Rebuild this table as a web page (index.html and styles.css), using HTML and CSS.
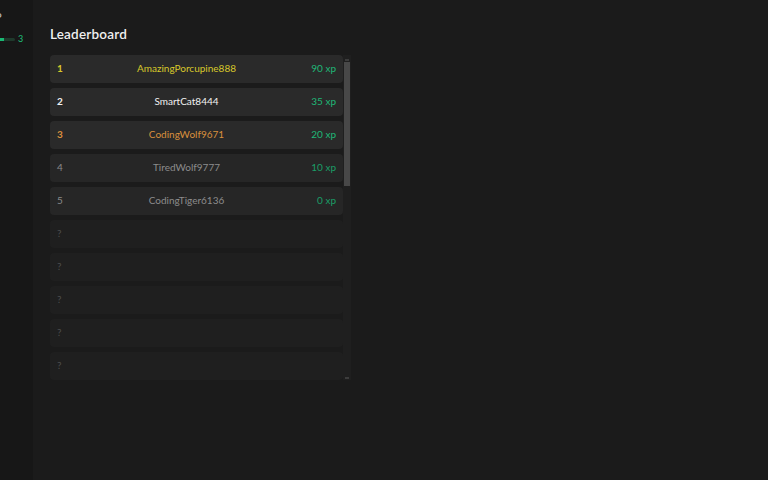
FILE: index.html
```html
<!DOCTYPE html>
<html>
<head>
<meta charset="utf-8">
<link rel="stylesheet" href="styles.css">
</head>
<body>
<div class="app">
  <aside class="sidebar">
    <div class="side-inner">
      <div class="side-mark">P</div>
      <div class="side-level">
        <div class="bar"><div class="bar-fill"></div></div>
        <span class="lvl">3</span>
      </div>
    </div>
  </aside>
  <main class="main">
    <h1 class="title">Leaderboard</h1>
    <div class="board">
      <div class="list">
        <div class="row gold"><span class="rank">1</span><span class="name">AmazingPorcupine888</span><span class="xp">90 xp</span></div>
        <div class="row silver"><span class="rank">2</span><span class="name">SmartCat8444</span><span class="xp">35 xp</span></div>
        <div class="row bronze"><span class="rank">3</span><span class="name">CodingWolf9671</span><span class="xp">20 xp</span></div>
        <div class="row plain"><span class="rank">4</span><span class="name">TiredWolf9777</span><span class="xp">10 xp</span></div>
        <div class="row plain"><span class="rank">5</span><span class="name">CodingTiger6136</span><span class="xp">0 xp</span></div>
        <div class="row empty"><span class="rank">?</span></div>
        <div class="row empty"><span class="rank">?</span></div>
        <div class="row empty"><span class="rank">?</span></div>
        <div class="row empty"><span class="rank">?</span></div>
        <div class="row empty"><span class="rank">?</span></div>
      </div>
      <div class="scrollbar">
        <div class="arrow up"></div>
        <div class="track"><div class="thumb"></div></div>
        <div class="arrow down"></div>
      </div>
    </div>
  </main>
</div>
</body>
</html>
```

FILE: styles.css
```css
html, body {
  margin: 0;
  padding: 0;
  height: 100%;
  background: #1b1b1b;
  font-family: "Lato", "Open Sans", sans-serif;
  color: #e8e8e8;
}
.app {
  display: flex;
  height: 480px;
}
.sidebar {
  width: 33px;
  flex: none;
  background: #171717;
  overflow: hidden;
}
.side-inner {
  margin-left: -8px;
  padding-top: 10px;
  display: flex;
  flex-direction: column;
  gap: 10px;
}
.side-mark {
  font-size: 11px;
  color: #bdbdbd;
  line-height: 14px;
  padding-left: 3px;
  height: 14px;
}
.side-level {
  display: flex;
  align-items: center;
  gap: 3px;
}
.bar {
  width: 23px;
  height: 3px;
  background: #1f3a2c;
  border-radius: 2px;
  overflow: hidden;
}
.bar-fill {
  width: 50%;
  height: 100%;
  background: #19b873;
}
.lvl {
  font-size: 9px;
  color: #1fbf77;
  line-height: 10px;
}
.main {
  flex: 1;
  padding: 25px 0 0 17px;
}
.title {
  margin: 0 0 12px 0;
  font-size: 13.5px;
  font-weight: 600;
  line-height: 18px;
  color: #f0f0f0;
  letter-spacing: 0.2px;
}
.board {
  display: flex;
  width: 301px;
  height: 325px;
}
.list {
  width: 293px;
  flex: none;
  overflow: hidden;
  display: flex;
  flex-direction: column;
  gap: 5px;
}
.scrollbar {
  width: 8px;
  flex: none;
  background: #1f1f1f;
  display: flex;
  flex-direction: column;
  padding-top: 2px;
  box-sizing: border-box;
}
.arrow {
  height: 5px;
  flex: none;
  display: flex;
  justify-content: center;
  align-items: center;
}
.arrow::after {
  content: "";
  width: 4px;
  height: 2px;
  background: #3c3c3c;
}
.track {
  flex: 1;
  padding: 0 1px;
}
.thumb {
  height: 124px;
  background: #484848;
}
.row {
  flex: none;
  height: 28px;
  box-sizing: border-box;
  padding: 0 7px 2px 7px;
  border-radius: 4px;
  display: flex;
  align-items: center;
  font-size: 10px;
  background: #2a2a2a;
}
.rank {
  width: 20px;
  font-weight: 700;
}
.name {
  flex: 1;
  text-align: center;
}
.xp {
  width: 40px;
  text-align: right;
  color: #1fb877;
}
.gold .rank, .gold .name { color: #d8c82a; }
.silver .rank, .silver .name { color: #f2f2f2; }
.bronze .rank, .bronze .name { color: #d9903d; }
.plain { background: #262626; }
.plain .rank { color: #8a8a8a; font-weight: 400; }
.plain .name { color: #8c8c8c; }
.plain .xp { color: #1a9e66; }
.empty { background: #1f1f1f; }
.empty .rank { color: #4d4d4d; font-weight: 400; }
```
